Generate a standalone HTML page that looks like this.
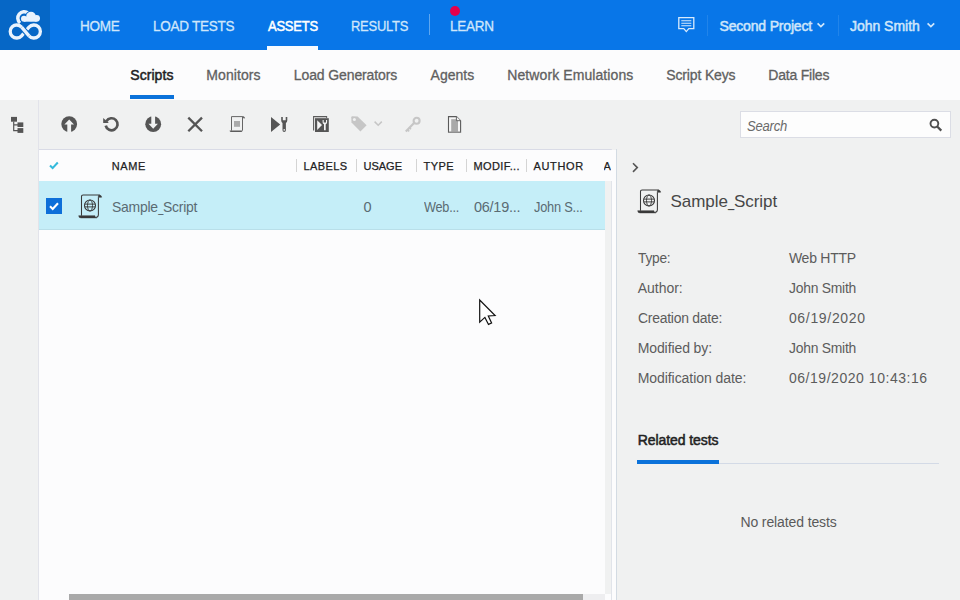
<!DOCTYPE html>
<html>
<head>
<meta charset="utf-8">
<title>Assets - Scripts</title>
<style>
*{box-sizing:border-box;margin:0;padding:0}
html,body{width:960px;height:600px;overflow:hidden;background:#f0f1f1;font-family:"Liberation Sans",sans-serif;}
.t{position:absolute;white-space:nowrap;line-height:1;font-family:"Liberation Sans",sans-serif}
.ic{position:absolute;overflow:visible}
#hdr{position:absolute;left:0;top:0;width:960px;height:50px;background:#0876e8}
#logo{position:absolute;left:0;top:0;width:50px;height:50px;background:#0667c6}
.vsep{position:absolute;width:1px;background:#5ea7f0}
#sub{position:absolute;left:0;top:50px;width:960px;height:50px;background:#fcfcfd}
#tool{position:absolute;left:0;top:100px;width:960px;height:50px;background:#f0f1f1}
#side{position:absolute;left:0;top:100px;width:39px;height:500px;background:#f0f1f1;border-right:1px solid #e2e3ea}
#tbl{position:absolute;left:39px;top:149px;width:573px;height:451px;background:#fcfcfd;border-top:1px solid #d9dbe6;border-right:1px solid #e1e4ea}
#rp{position:absolute;left:616px;top:149px;width:344px;height:451px;background:#f0f1f1;border-left:1px solid #d3dbe3}
.hs{position:absolute;top:159px;width:1px;height:13px;background:#d4d4d4}
</style>
</head>
<body>

<div id="hdr"></div>
<div id="logo">
<svg width="50" height="50" viewBox="0 0 50 50" style="position:absolute;left:0;top:0">
 <g fill="none" stroke="#e9f3fd" stroke-width="3.3" stroke-linejoin="round">
  <path d="M21.6 27.2 A6.5 6.5 0 1 0 21.6 35.8 L29 27.2 A6.5 6.5 0 1 1 29 35.8"/>
  <path d="M23.2 29.3 L27.3 33.7" stroke="#0667c6" stroke-width="5.6"/>
  <path d="M21.6 27.2 L29 35.8"/>
  <path d="M20.1 23 A6 6 0 0 1 28.2 13.2" stroke-width="3.5"/>
 </g>
 <g fill="#0667c6" stroke="#0667c6" stroke-width="2">
  <circle cx="24" cy="18.7" r="3"/><circle cx="31" cy="16.5" r="4.8"/><circle cx="36.6" cy="18.3" r="3.4"/><rect x="24" y="17" width="12.6" height="4.7"/>
 </g>
 <g fill="#e9f3fd">
  <circle cx="24" cy="18.7" r="3"/><circle cx="31" cy="16.5" r="4.8"/><circle cx="36.6" cy="18.3" r="3.4"/><rect x="24" y="17" width="12.6" height="4.7"/>
 </g>
</svg>
</div>
<div class="vsep" style="left:428.5px;top:14px;height:21px"></div>
<div class="vsep" style="left:707px;top:15px;height:21px;opacity:.3"></div>
<div class="vsep" style="left:837.5px;top:15px;height:21px;opacity:.3"></div>
<div style="position:absolute;left:267px;top:46px;width:51px;height:4px;background:#f7fbff"></div>
<div style="position:absolute;left:450px;top:6px;width:10px;height:10px;border-radius:5px;background:#e5004c"></div>
<svg class="ic" style="left:677px;top:16px" width="19" height="18" viewBox="0 0 19 18">
 <path d="M1.8 1.7 H16.8 V12.6 H11.8 L9.3 15.6 L6.8 12.6 H1.8 Z" fill="none" stroke="#d8eafc" stroke-width="1.3"/>
 <path d="M4.3 4.7 H14.3 M4.3 7.2 H14.3 M4.3 9.7 H14.3" stroke="#d8eafc" stroke-width="1.1"/>
</svg>
<svg class="ic" style="left:816px;top:21px" width="10" height="8" viewBox="0 0 10 8"><path d="M1.6 2.3 L4.9 5.6 L8.2 2.3" fill="none" stroke="#cfe6fb" stroke-width="1.7"/></svg>
<svg class="ic" style="left:925.5px;top:20.6px" width="10" height="8" viewBox="0 0 10 8"><path d="M1.6 2.3 L4.9 5.6 L8.2 2.3" fill="none" stroke="#cfe6fb" stroke-width="1.7"/></svg>

<div id="sub"></div>
<div style="position:absolute;left:130px;top:95px;width:44px;height:4px;background:#0b72da"></div>
<div id="tool"></div>
<div id="side"></div>

<!-- toolbar icons -->
<svg class="ic" style="left:10px;top:116px" width="15" height="18" viewBox="0 0 15 18">
 <g fill="#555555"><rect x="1" y="0.9" width="6" height="4.8"/><rect x="7.5" y="6.4" width="5.8" height="4.6"/><rect x="7.5" y="12.1" width="5.8" height="4.8"/></g>
 <path d="M3.7 5.5 V14.6 H8 M3.7 8.8 H8" fill="none" stroke="#555555" stroke-width="1.2"/>
</svg>
<svg class="ic" style="left:60px;top:115px" width="18" height="18" viewBox="0 0 18 18">
 <circle cx="9.2" cy="9.1" r="7.9" fill="#555555"/>
 <path d="M9.2 4.4 L14 9.4 H11.1 V17.5 H7.3 V9.4 H4.4 Z" fill="#f0f1f1"/>
</svg>
<svg class="ic" style="left:102px;top:115px" width="18" height="18" viewBox="0 0 18 18">
 <path d="M3.73 10.6 A6 6 0 1 0 4.4 6.2" fill="none" stroke="#555555" stroke-width="2.7"/>
 <path d="M1.2 3 V8.1 H6.9 Z" fill="#555555"/>
</svg>
<svg class="ic" style="left:144px;top:115px" width="18" height="18" viewBox="0 0 18 18">
 <circle cx="9.2" cy="9.2" r="7.9" fill="#555555"/>
 <path d="M7.3 0.5 H11.1 V8.8 H13.9 L9.2 13.7 L4.5 8.8 H7.3 Z" fill="#f0f1f1"/>
</svg>
<svg class="ic" style="left:186px;top:115px" width="18" height="18" viewBox="0 0 18 18">
 <path d="M2.3 2.6 L16 16.3 M16 2.6 L2.3 16.3" stroke="#555555" stroke-width="2.3"/>
</svg>
<svg class="ic" style="left:229px;top:115px" width="17" height="18" viewBox="0 0 17 18">
 <path d="M2.5 15.6 V1.6 H13.5 V15.6" fill="none" stroke="#666" stroke-width="1"/>
 <path d="M13.5 2.8 V1.6 H14.6 Q15.6 1.9 15.7 3.2 Z" fill="#666" stroke="#666" stroke-width="0.5"/>
 <path d="M0.6 15.5 H13.5 Q13.4 17 12 17 H2.2 Q0.7 17 0.6 15.5 Z" fill="#5c5c5c"/>
 <rect x="5" y="6" width="6" height="5.8" fill="#aaaaaa"/>
</svg>
<svg class="ic" style="left:270px;top:115px" width="19" height="18" viewBox="0 0 19 18">
 <path d="M1 1.9 V16.9 L10.2 9.4 Z" fill="#555555"/>
 <path d="M11.2 1.9 V5.2 Q11.2 7.4 12.5 8 V15.2 Q12.5 16.9 14.2 16.9 Q15.9 16.9 15.9 15.2 V8 Q17.3 7.4 17.3 5.2 V1.9 H15.7 V5.2 H12.8 V1.9 Z" fill="#555555"/>
 <circle cx="14.2" cy="14.9" r="0.8" fill="#f0f1f1"/>
</svg>
<svg class="ic" style="left:312px;top:115px" width="18" height="18" viewBox="0 0 18 18">
 <path d="M1.6 15.4 V1.6 H14.6 V3" fill="none" stroke="#5c5c5c" stroke-width="1.1"/>
 <rect x="2.2" y="2.2" width="12" height="1" fill="#c4c4c4"/>
 <rect x="3" y="3.2" width="13.8" height="13.8" fill="#555555"/>
 <path d="M5.2 5.3 V15 L10 10.1 Z" fill="#f4f4f4"/>
 <path d="M10.6 5 V7.2 Q10.6 8.8 12 9.2 V15.2 H13.7 V9.2 Q15.1 8.8 15.1 7.2 V5 H14 V7.4 H11.7 V5 Z" fill="#f4f4f4"/>
</svg>
<svg class="ic" style="left:350px;top:115px" width="18" height="18" viewBox="0 0 18 18">
 <path d="M1.3 2.2 Q1.3 1.3 2.3 1.3 L7.6 1.5 L16.6 10.3 L10.4 16.4 L1.5 7.4 Z" fill="#c6c6c6"/>
 <circle cx="4.4" cy="4.5" r="1.5" fill="#f0f1f1"/>
</svg>
<svg class="ic" style="left:373px;top:119.4px" width="11" height="9" viewBox="0 0 11 9"><path d="M1.6 2.6 L5.2 6.2 L8.8 2.6" fill="none" stroke="#c6c6c6" stroke-width="1.5"/></svg>
<svg class="ic" style="left:404px;top:115px" width="18" height="19" viewBox="0 0 18 19">
 <circle cx="12.6" cy="5.8" r="3" fill="none" stroke="#c6c6c6" stroke-width="2.1"/>
 <path d="M9.8 8.2 L1.8 16.4" stroke="#c6c6c6" stroke-width="2.2"/>
 <path d="M3.4 14.6 L5.2 16.4 M5.4 12.6 L7 14.2" stroke="#c6c6c6" stroke-width="1.6"/>
</svg>
<svg class="ic" style="left:447px;top:115px" width="15" height="19" viewBox="0 0 15 19">
 <path d="M1.5 1.6 H9.4 L13.6 5.7 V17.2 H1.5 Z" fill="#f6f6f6" stroke="#5a5a5a" stroke-width="1.1"/>
 <rect x="4.2" y="4.2" width="6.8" height="13.5" fill="#a9a9a9"/>
 <path d="M1.5 17.3 H13.6" stroke="#8d8d8d" stroke-width="1.1"/>
 <path d="M9.4 1.6 V5.7 H13.6" fill="#f0f1f1" stroke="#5a5a5a" stroke-width="0.9"/>
</svg>

<!-- search -->
<div style="position:absolute;left:740px;top:111px;width:211px;height:27px;background:#fdfdfd;border:1px solid #dbdde5"></div>
<svg class="ic" style="left:928px;top:117px" width="16" height="16" viewBox="0 0 16 16">
 <circle cx="6.4" cy="6.6" r="3.9" fill="none" stroke="#4f4f4f" stroke-width="1.9"/>
 <path d="M9.2 9.5 L13.3 13.6" stroke="#4f4f4f" stroke-width="2.3"/>
</svg>

<!-- table -->
<div id="tbl"></div>
<div style="position:absolute;left:612px;top:150px;width:4px;height:450px;background:#fcfcfd"></div>
<div id="rp"></div>
<div style="position:absolute;left:39px;top:181px;width:566px;height:49px;background:#c5eef8;border-bottom:1px solid #b9dfe9"></div>
<div class="hs" style="left:296px"></div><div class="hs" style="left:356px"></div><div class="hs" style="left:416px"></div><div class="hs" style="left:466px"></div><div class="hs" style="left:526px"></div>
<svg class="ic" style="left:48px;top:160px" width="12" height="11" viewBox="0 0 12 11"><path d="M2 5.6 L4.6 8.1 L9.8 2.5" fill="none" stroke="#35badc" stroke-width="2.1"/></svg>
<div style="position:absolute;left:46px;top:198px;width:16px;height:16px;background:#0d6fd9"></div>
<svg class="ic" style="left:46px;top:198px" width="16" height="16" viewBox="0 0 16 16"><path d="M4 8.3 L6.7 10.9 L12 5.2" fill="none" stroke="#ffffff" stroke-width="2.1"/></svg>
<svg class="ic" style="left:78px;top:193.5px" width="24" height="24" viewBox="0 0 24 24">
<g fill="none" stroke="#3a3a3a" stroke-width="1.05">
 <path d="M3.5 21.8 V2.6 Q3.5 1 5.1 1 H21.6"/>
 <path d="M20.4 3.2 V20.4 Q20.4 23.4 17.2 23.4"/>
 <path d="M20.4 3.2 V2.2 Q20.4 1 21.6 1 Q23.5 1.4 23.6 3.2 Z" fill="#3a3a3a" stroke-width="0.6"/>
 <path d="M0.7 21.7 H16.9 Q16.9 23.9 18.6 23.9 H3 Q0.7 23.9 0.7 21.7 Z" fill="#3a3a3a" stroke-width="0.5"/>
 <circle cx="12" cy="11.5" r="5.5" stroke-width="1.1"/>
 <ellipse cx="12" cy="11.5" rx="2.5" ry="5.5" stroke-width="0.95"/>
 <path d="M6.8 10.1 H17.2 M6.8 12.9 H17.2" stroke-width="0.95"/>
</g></svg>
<div style="position:absolute;left:603.5px;top:150px;width:8px;height:31px;background:#fcfcfd"></div>
<div class="t" style="left:603.6px;top:160.89px;font-size:11px;color:#222;-webkit-text-stroke:0.25px #222;width:7.4px;overflow:hidden">A</div>
<!-- h scrollbar -->
<div style="position:absolute;left:605px;top:181px;width:6px;height:413px;background:#f0f1f1"></div>
<div style="position:absolute;left:69px;top:594px;width:536px;height:6px;background:#eeeef0"></div>
<div style="position:absolute;left:69px;top:594px;width:514px;height:6px;background:#a9a9a9"></div>

<!-- right panel -->
<svg class="ic" style="left:630px;top:161px" width="10" height="13" viewBox="0 0 10 13"><path d="M3 2.3 L7.3 6.6 L3 10.9" fill="none" stroke="#555" stroke-width="1.6"/></svg>
<svg class="ic" style="left:637px;top:188.5px" width="24" height="24" viewBox="0 0 24 24">
<g fill="none" stroke="#3a3a3a" stroke-width="1.05">
 <path d="M3.5 21.8 V2.6 Q3.5 1 5.1 1 H21.6"/>
 <path d="M20.4 3.2 V20.4 Q20.4 23.4 17.2 23.4"/>
 <path d="M20.4 3.2 V2.2 Q20.4 1 21.6 1 Q23.5 1.4 23.6 3.2 Z" fill="#3a3a3a" stroke-width="0.6"/>
 <path d="M0.7 21.7 H16.9 Q16.9 23.9 18.6 23.9 H3 Q0.7 23.9 0.7 21.7 Z" fill="#3a3a3a" stroke-width="0.5"/>
 <circle cx="12" cy="11.5" r="5.5" stroke-width="1.1"/>
 <ellipse cx="12" cy="11.5" rx="2.5" ry="5.5" stroke-width="0.95"/>
 <path d="M6.8 10.1 H17.2 M6.8 12.9 H17.2" stroke-width="0.95"/>
</g></svg>
<div style="position:absolute;left:637px;top:460px;width:82px;height:4px;background:#0b72da"></div>
<div style="position:absolute;left:719px;top:463px;width:220px;height:1px;background:#d3dae6"></div>

<!-- mouse cursor -->
<svg class="ic" style="left:476px;top:296px" width="24" height="32" viewBox="0 0 24 32">
 <path d="M3.7 4 V26.2 L8.9 21.4 L12.5 28.4 L15.6 27 L12.3 20 L19.1 19.5 Z" fill="#ffffff" stroke="#111" stroke-width="1.2" stroke-linejoin="miter"/>
</svg>

<div class="t" style="left:80.30px;top:18.95px;font-size:14px;color:#cfe6fb;font-weight:normal;font-style:normal;-webkit-text-stroke:0.3px #cfe6fb;transform:scaleX(0.9673);transform-origin:0 0;letter-spacing:-0.250px">HOME</div>
<div class="t" style="left:153.00px;top:18.95px;font-size:14px;color:#cfe6fb;font-weight:normal;font-style:normal;-webkit-text-stroke:0.3px #cfe6fb;transform:scaleX(0.9641);transform-origin:0 0;letter-spacing:-0.250px">LOAD TESTS</div>
<div class="t" style="left:267.80px;top:18.95px;font-size:14px;color:#ffffff;font-weight:normal;font-style:normal;-webkit-text-stroke:0.5px #ffffff;transform:scaleX(0.9278);transform-origin:0 0;letter-spacing:-0.250px">ASSETS</div>
<div class="t" style="left:350.70px;top:18.95px;font-size:14px;color:#cfe6fb;font-weight:normal;font-style:normal;-webkit-text-stroke:0.3px #cfe6fb;transform:scaleX(0.9235);transform-origin:0 0;letter-spacing:-0.250px">RESULTS</div>
<div class="t" style="left:450.00px;top:18.95px;font-size:14px;color:#cfe6fb;font-weight:normal;font-style:normal;-webkit-text-stroke:0.3px #cfe6fb;transform:scaleX(0.9653);transform-origin:0 0;letter-spacing:-0.250px">LEARN</div>
<div class="t" style="left:719.50px;top:18.75px;font-size:14px;color:#cfe6fb;font-weight:normal;font-style:normal;-webkit-text-stroke:0.5px #cfe6fb;letter-spacing:-0.173px">Second Project</div>
<div class="t" style="left:850.00px;top:18.75px;font-size:14px;color:#cfe6fb;font-weight:normal;font-style:normal;-webkit-text-stroke:0.5px #cfe6fb;letter-spacing:-0.027px">John Smith</div>
<div class="t" style="left:130.30px;top:68.45px;font-size:14px;color:#222222;font-weight:normal;font-style:normal;-webkit-text-stroke:0.5px #222222;letter-spacing:0.051px">Scripts</div>
<div class="t" style="left:206.30px;top:68.45px;font-size:14px;color:#606060;font-weight:normal;font-style:normal;-webkit-text-stroke:0.3px #606060;letter-spacing:0.088px">Monitors</div>
<div class="t" style="left:293.80px;top:68.45px;font-size:14px;color:#606060;font-weight:normal;font-style:normal;-webkit-text-stroke:0.3px #606060;letter-spacing:-0.113px">Load Generators</div>
<div class="t" style="left:430.60px;top:68.45px;font-size:14px;color:#606060;font-weight:normal;font-style:normal;-webkit-text-stroke:0.3px #606060;letter-spacing:0.021px">Agents</div>
<div class="t" style="left:507.30px;top:68.45px;font-size:14px;color:#606060;font-weight:normal;font-style:normal;-webkit-text-stroke:0.3px #606060;letter-spacing:0.088px">Network Emulations</div>
<div class="t" style="left:666.30px;top:68.45px;font-size:14px;color:#606060;font-weight:normal;font-style:normal;-webkit-text-stroke:0.3px #606060;letter-spacing:-0.151px">Script Keys</div>
<div class="t" style="left:768.30px;top:68.45px;font-size:14px;color:#606060;font-weight:normal;font-style:normal;-webkit-text-stroke:0.3px #606060;letter-spacing:-0.215px">Data Files</div>
<div class="t" style="left:747.30px;top:118.65px;font-size:14px;color:#6a6a6a;font-weight:normal;font-style:italic;transform:scaleX(0.9325);transform-origin:0 0;letter-spacing:-0.250px">Search</div>
<div class="t" style="left:111.80px;top:160.89px;font-size:11px;color:#222;font-weight:normal;font-style:normal;-webkit-text-stroke:0.25px #222;letter-spacing:0.573px">NAME</div>
<div class="t" style="left:303.50px;top:160.89px;font-size:11px;color:#222;font-weight:normal;font-style:normal;-webkit-text-stroke:0.25px #222;letter-spacing:0.421px">LABELS</div>
<div class="t" style="left:363.50px;top:160.89px;font-size:11px;color:#222;font-weight:normal;font-style:normal;-webkit-text-stroke:0.25px #222;letter-spacing:-0.004px">USAGE</div>
<div class="t" style="left:423.50px;top:160.89px;font-size:11px;color:#222;font-weight:normal;font-style:normal;-webkit-text-stroke:0.25px #222;letter-spacing:0.422px">TYPE</div>
<div class="t" style="left:473.50px;top:160.89px;font-size:11px;color:#222;font-weight:normal;font-style:normal;-webkit-text-stroke:0.25px #222;letter-spacing:0.387px">MODIF...</div>
<div class="t" style="left:533.50px;top:160.89px;font-size:11px;color:#222;font-weight:normal;font-style:normal;-webkit-text-stroke:0.25px #222;letter-spacing:0.649px">AUTHOR</div>
<div class="t" style="left:111.80px;top:199.53px;font-size:14.5px;color:#5a6b73;font-weight:normal;font-style:normal;transform:scaleX(0.9620);transform-origin:0 0;letter-spacing:-0.250px">Sample<span style="display:inline-block;width:5.32px;transform:scaleX(0.66);transform-origin:0 50%">_</span>Script</div>
<div class="t" style="left:363.50px;top:199.53px;font-size:14.5px;color:#5a6b73;font-weight:normal;font-style:normal;letter-spacing:0.000px">0</div>
<div class="t" style="left:423.50px;top:199.53px;font-size:14.5px;color:#5a6b73;font-weight:normal;font-style:normal;transform:scaleX(0.8740);transform-origin:0 0;letter-spacing:-0.250px">Web...</div>
<div class="t" style="left:473.50px;top:199.53px;font-size:14.5px;color:#5a6b73;font-weight:normal;font-style:normal;transform:scaleX(0.9973);transform-origin:0 0;letter-spacing:-0.250px">06/19...</div>
<div class="t" style="left:533.50px;top:199.53px;font-size:14.5px;color:#5a6b73;font-weight:normal;font-style:normal;transform:scaleX(0.8835);transform-origin:0 0;letter-spacing:-0.250px">John S...</div>
<div class="t" style="left:670.60px;top:193.31px;font-size:17px;color:#474747;font-weight:normal;font-style:normal;letter-spacing:-0.070px">Sample<span style="display:inline-block;width:6.24px;transform:scaleX(0.66);transform-origin:0 50%">_</span>Script</div>
<div class="t" style="left:637.70px;top:250.65px;font-size:14px;color:#5c5c5c;font-weight:normal;font-style:normal;transform:scaleX(0.9805);transform-origin:0 0;letter-spacing:-0.250px">Type:</div>
<div class="t" style="left:637.70px;top:280.65px;font-size:14px;color:#5c5c5c;font-weight:normal;font-style:normal;letter-spacing:-0.023px">Author:</div>
<div class="t" style="left:637.70px;top:310.65px;font-size:14px;color:#5c5c5c;font-weight:normal;font-style:normal;transform:scaleX(0.9952);transform-origin:0 0;letter-spacing:-0.250px">Creation date:</div>
<div class="t" style="left:637.70px;top:340.65px;font-size:14px;color:#5c5c5c;font-weight:normal;font-style:normal;letter-spacing:-0.099px">Modified by:</div>
<div class="t" style="left:637.70px;top:370.65px;font-size:14px;color:#5c5c5c;font-weight:normal;font-style:normal;letter-spacing:-0.061px">Modification date:</div>
<div class="t" style="left:788.90px;top:250.65px;font-size:14px;color:#5c5c5c;font-weight:normal;font-style:normal;letter-spacing:-0.241px">Web HTTP</div>
<div class="t" style="left:788.90px;top:280.65px;font-size:14px;color:#5c5c5c;font-weight:normal;font-style:normal;transform:scaleX(0.9927);transform-origin:0 0;letter-spacing:-0.250px">John Smith</div>
<div class="t" style="left:788.90px;top:310.65px;font-size:14px;color:#5c5c5c;font-weight:normal;font-style:normal;letter-spacing:0.680px">06/19/2020</div>
<div class="t" style="left:788.90px;top:340.65px;font-size:14px;color:#5c5c5c;font-weight:normal;font-style:normal;transform:scaleX(0.9927);transform-origin:0 0;letter-spacing:-0.250px">John Smith</div>
<div class="t" style="left:788.90px;top:370.65px;font-size:14px;color:#5c5c5c;font-weight:normal;font-style:normal;letter-spacing:0.541px">06/19/2020 10:43:16</div>
<div class="t" style="left:637.70px;top:433.45px;font-size:14px;color:#222;font-weight:normal;font-style:normal;-webkit-text-stroke:0.5px #222;letter-spacing:-0.077px">Related tests</div>
<div class="t" style="left:740.40px;top:514.95px;font-size:14px;color:#5a5a5a;font-weight:normal;font-style:normal;letter-spacing:-0.111px">No related tests</div>
</body>
</html>
